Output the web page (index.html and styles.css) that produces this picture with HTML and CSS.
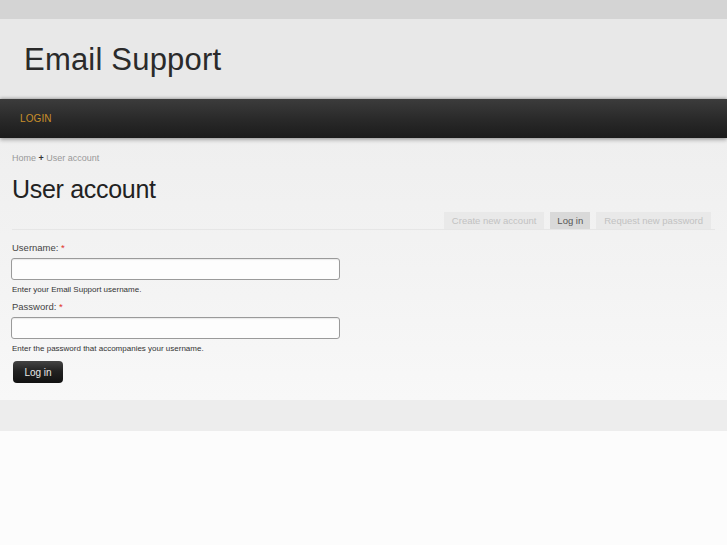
FILE: index.html
```html
<!DOCTYPE html>
<html lang="en">
<head>
  <meta charset="UTF-8" />
  <title>User account | Email Support</title>
  <link rel="stylesheet" href="styles.css">
</head>
<body>
  <div class="topbar"></div>

  <!-- Site header -->
  <header class="site-header">
    <h1 class="site-name">Email Support</h1>
  </header>

  <!-- Main menu -->
  <nav class="main-menu">
    <a href="#" class="menu-link">Login</a>
  </nav>

  <!-- Content -->
  <div class="main">
    <div class="breadcrumb">
      <a href="#">Home</a> <span class="sep">+</span> <a href="#">User account</a>
    </div>
    <h2 class="page-title">User account</h2>

    <ul class="tabs">
      <li><a href="#">Create new account</a></li>
      <li class="active"><a href="#">Log in</a></li>
      <li><a href="#">Request new password</a></li>
    </ul>

    <form class="login-form">
      <div class="form-item">
        <label for="edit-name">Username: <span class="required">*</span></label>
        <input type="text" id="edit-name" class="form-text" />
        <div class="description">Enter your Email Support username.</div>
      </div>
      <div class="form-item">
        <label for="edit-pass">Password: <span class="required">*</span></label>
        <input type="password" id="edit-pass" class="form-text" />
        <div class="description">Enter the password that accompanies your username.</div>
      </div>
      <button type="submit" class="form-submit">Log in</button>
    </form>
  </div>

  <footer class="site-footer"></footer>
</body>
</html>
```

FILE: styles.css
```css
/* Base */
* {
  box-sizing: border-box;
}

html, body {
  margin: 0;
  padding: 0;
  background-color: #fcfcfc;
  font-family: 'Liberation Sans', Arial, sans-serif;
  color: #333;
}

a {
  text-decoration: none;
}

/* Top strip */
.topbar {
  height: 19px;
  background-color: #d4d4d4;
}

/* Header */
.site-header {
  height: 80px;
  background-color: #e8e8e8;
  padding: 0 24px;
  display: flex;
  align-items: center;
}

.site-name {
  margin: 0;
  font-size: 31px;
  font-weight: normal;
  color: #2a2a2a;
  letter-spacing: 0.2px;
  padding-top: 1px;
}

/* Main menu */
.main-menu {
  height: 39px;
  background: linear-gradient(to bottom, #3c3c3c 0%, #2a2a2a 50%, #1b1b1b 100%);
  box-shadow: 0 -1px 3px rgba(0, 0, 0, 0.25), 0 2px 4px rgba(0, 0, 0, 0.3);
  display: flex;
  align-items: center;
  padding: 0 20px;
  position: relative;
}

.menu-link {
  color: #c98f2a;
  font-size: 10px;
  text-transform: uppercase;
  letter-spacing: 0.1px;
}

/* Content */
.main {
  background: linear-gradient(to bottom, #efefef 0%, #f3f3f3 50%, #f8f8f8 100%);
  padding: 13px 12px 17px 12px;
}

.breadcrumb {
  font-size: 9px;
  line-height: 14px;
  color: #999;
}

.breadcrumb a {
  color: #999;
}

.breadcrumb .sep {
  color: #333;
  font-weight: bold;
  font-size: 9px;
}

.page-title {
  margin: 9px 0 0 0;
  font-size: 25px;
  line-height: 30px;
  font-weight: normal;
  color: #222;
  letter-spacing: -0.3px;
}

/* Tabs */
.tabs {
  list-style: none;
  margin: 8px 0 0 0;
  padding: 0 4px 0 0;
  display: flex;
  justify-content: flex-end;
  gap: 6px;
  border-bottom: 1px solid #e6e6e6;
}

.tabs li a {
  display: block;
  height: 17px;
  line-height: 17px;
  padding: 0 8px;
  font-size: 9.5px;
  background-color: #e9e9e9;
  color: #c2c2c2;
}

.tabs li.active a {
  background-color: #d9d9d9;
  color: #555;
  padding: 0 7px;
}

/* Login form */
.login-form {
  padding-top: 11px;
}

.form-item {
  margin-bottom: 5px;
}

.form-item label {
  display: block;
  font-size: 9.5px;
  line-height: 14px;
  color: #444;
  margin-bottom: 3px;
}

.required {
  color: #e0312b;
}

.form-text {
  display: block;
  width: 329px;
  height: 22px;
  margin: 0 0 0 -1px;
  border: 1px solid #9a9a9a;
  border-radius: 3px;
  background-color: #fdfdfd;
  box-shadow: inset 0 1px 1px rgba(0, 0, 0, 0.08);
}

.description {
  margin-top: 5px;
  font-size: 8px;
  line-height: 10px;
  color: #333;
}

.form-submit {
  display: block;
  margin: 7px 0 0 1px;
  width: 50px;
  height: 22px;
  border: none;
  border-radius: 4px;
  background: linear-gradient(to bottom, #444 0%, #222 45%, #111 100%);
  color: #e8e8e8;
  font-family: 'Liberation Sans', Arial, sans-serif;
  font-size: 10px;
  cursor: pointer;
}

/* Footer */
.site-footer {
  height: 31px;
  background-color: #ededed;
}
```
